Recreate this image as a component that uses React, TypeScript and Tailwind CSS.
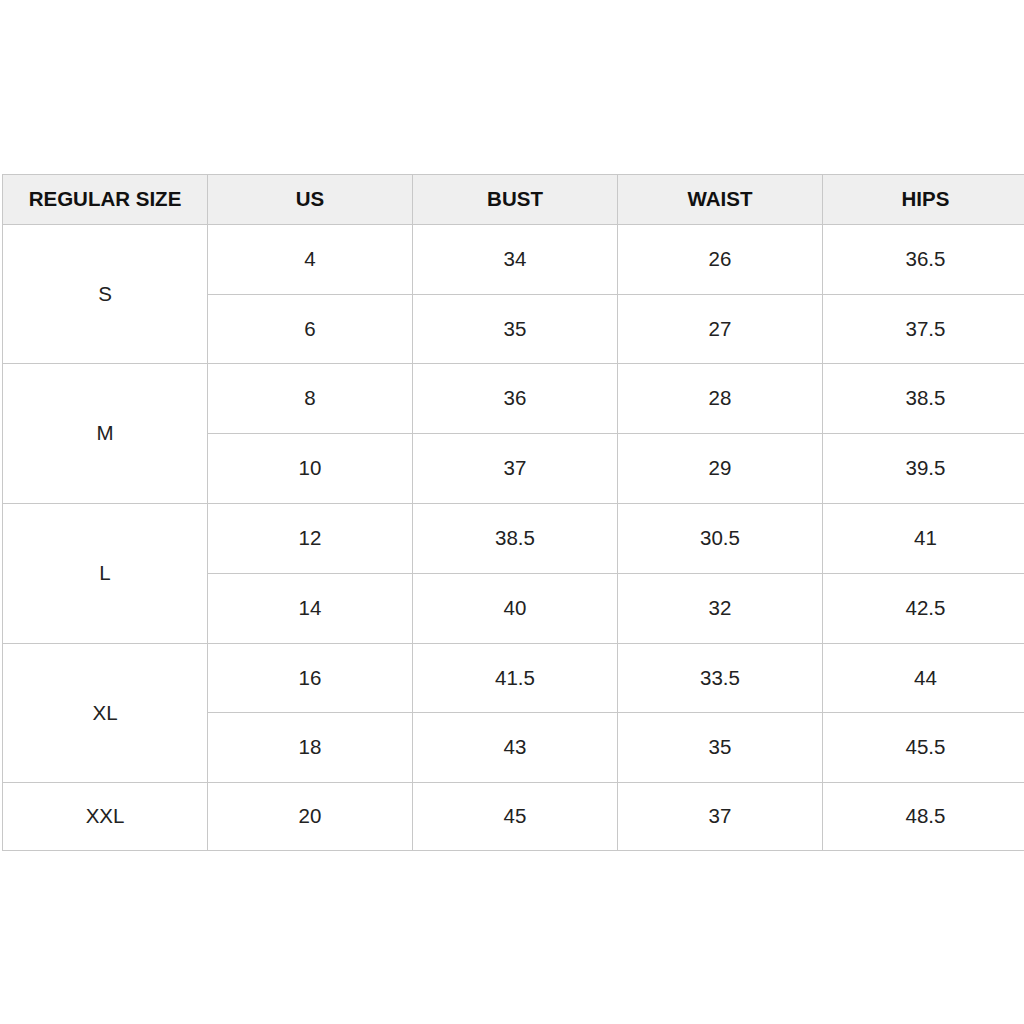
const groups: { size: string; rows: [string, string, string, string][] }[] = [
  {
    size: "S",
    rows: [
      ["4", "34", "26", "36.5"],
      ["6", "35", "27", "37.5"],
    ],
  },
  {
    size: "M",
    rows: [
      ["8", "36", "28", "38.5"],
      ["10", "37", "29", "39.5"],
    ],
  },
  {
    size: "L",
    rows: [
      ["12", "38.5", "30.5", "41"],
      ["14", "40", "32", "42.5"],
    ],
  },
  {
    size: "XL",
    rows: [
      ["16", "41.5", "33.5", "44"],
      ["18", "43", "35", "45.5"],
    ],
  },
  {
    size: "XXL",
    rows: [["20", "45", "37", "48.5"]],
  },
];

const headers = ["REGULAR SIZE", "US", "BUST", "WAIST", "HIPS"];

// row heights measured off the picture, they drift a pixel here and there
const rowHeights = [
  "h-[70px]",
  "h-[69px]",
  "h-[70px]",
  "h-[70px]",
  "h-[70px]",
  "h-[70px]",
  "h-[69px]",
  "h-[70px]",
  "h-[68px]",
];

export default function App() {
  let n = 0;
  return (
    <div className="h-[1024px] w-[1024px] overflow-hidden bg-white pl-[2px] pt-[174px] font-['Liberation_Sans',Arial,sans-serif] text-[#222]">
      <table className="w-[1026px] table-fixed border-collapse">
        <colgroup>
          <col className="w-[205px]" />
          <col className="w-[205px]" />
          <col className="w-[205px]" />
          <col className="w-[205px]" />
          <col className="w-[206px]" />
        </colgroup>
        <thead>
          <tr className="h-[50px] bg-[#efefef]">
            {headers.map((h) => (
              <th
                key={h}
                className="border border-[#c8c8c8] p-0 text-center text-[20.5px] font-bold text-[#111]"
              >
                {h}
              </th>
            ))}
          </tr>
        </thead>
        <tbody>
          {groups.map((g) =>
            g.rows.map((r, i) => (
              <tr key={g.size + i} className={rowHeights[n++]}>
                {i === 0 ? (
                  <td
                    rowSpan={g.rows.length}
                    className="border border-[#c8c8c8] p-0 text-center text-[20.5px]"
                  >
                    {g.size}
                  </td>
                ) : null}
                {r.map((v, j) => (
                  <td
                    key={j}
                    className="border border-[#c8c8c8] p-0 text-center text-[20.5px]"
                  >
                    {v}
                  </td>
                ))}
              </tr>
            ))
          )}
        </tbody>
      </table>
    </div>
  );
}
